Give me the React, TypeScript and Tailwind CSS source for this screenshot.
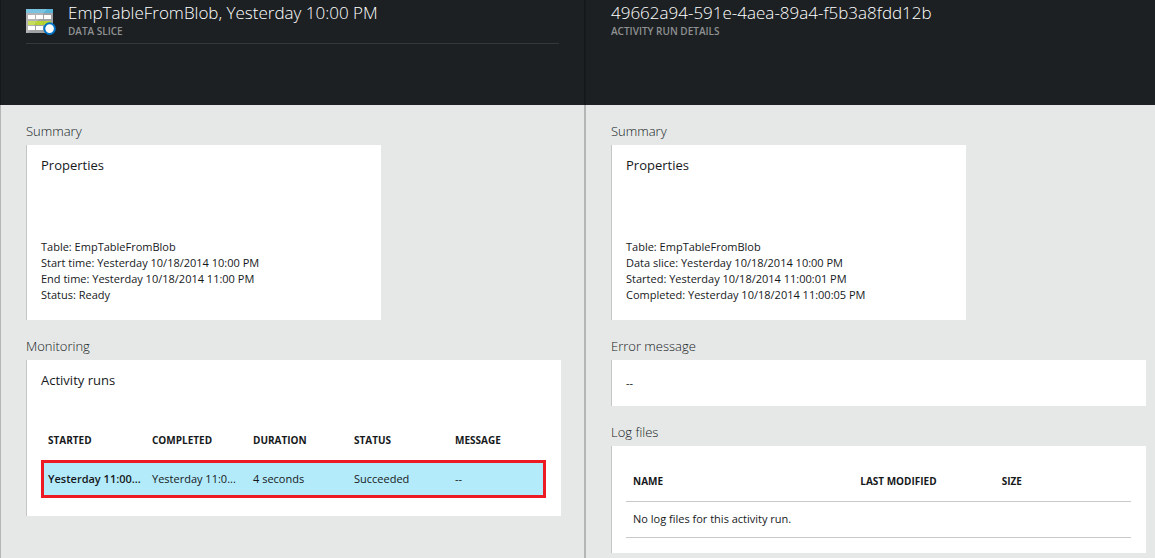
import type { ReactNode } from 'react';

function SliceIcon() {
  return (
    <svg className="mt-[9px] h-[26px] w-[30px] shrink-0" viewBox="0 0 30 26" aria-hidden="true">
      <rect x="0" y="0" width="27" height="24" fill="#a0a1a2" />
      <rect x="0" y="0" width="27" height="4" fill="#59b4d9" />
      <rect x="2" y="12" width="7" height="4" fill="#b8d432" />
      <rect x="10" y="12" width="7" height="4" fill="#b8d432" />
      <rect x="18" y="12" width="7" height="4" fill="#b8d432" />
      <path d="M9.5 12v4M17.5 12v4" stroke="#a9c63a" strokeWidth="1" />
      <path d="M0 0H21L2 24H0Z" fill="#ffffff" fillOpacity="0.2" />
      <g fill="#ffffff">
        <rect x="2" y="6" width="7" height="4" />
        <rect x="10" y="6" width="7" height="4" />
        <rect x="18" y="6" width="7" height="4" />
        <rect x="2" y="17" width="7" height="4" />
        <rect x="10" y="17" width="7" height="4" />
      </g>
      <circle cx="23.6" cy="19.6" r="5.3" fill="#ffffff" stroke="#0072c6" strokeWidth="2" />
    </svg>
  );
}

function BladeHeader({ title, subtitle, icon }: { title: string; subtitle: string; icon?: ReactNode }) {
  return (
    <header className="h-[105px] bg-[#1c2022] pl-[25px] pr-[25px] text-white">
      <div className={`flex h-11 gap-3 ${icon ? 'border-b border-[#34383a]' : ''}`}>
        {icon}
        <div className="min-w-0 whitespace-nowrap">
          <h1 className="text-[17px] leading-[25px] font-light">{title}</h1>
          <p className="text-[10px] leading-[13px] font-semibold text-[#8f9192]">{subtitle}</p>
        </div>
      </div>
    </header>
  );
}

function Section({ label, children }: { label: string; children: ReactNode }) {
  return (
    <section className="pt-4">
      <h2 className="mb-1 text-[13px] leading-5 font-light">{label}</h2>
      {children}
    </section>
  );
}

const card = 'border-l border-[#c4c6c6] bg-white pl-[14px] pr-[15px]';

function Properties({ lines }: { lines: string[] }) {
  return (
    <div className={`${card} max-w-[355px] pt-[10px] pb-[17px]`}>
      <h3 className="text-[13px] leading-5">Properties</h3>
      <div className="mt-16 text-[11px] leading-4">
        {lines.map((line) => (
          <p key={line}>{line}</p>
        ))}
      </div>
    </div>
  );
}

const th = 'h-10 pl-[7px] text-left text-[10px] font-bold';

export default function App() {
  return (
    <div className="grid min-h-screen grid-cols-[584fr_571fr] bg-[#e5e8e7] font-['Open_Sans','Noto_Sans',sans-serif] text-[#16191b]">
      <div className="flex min-w-0 flex-col">
        <div className="border-l border-[#14181a]">
          <BladeHeader title="EmpTableFromBlob, Yesterday 10:00 PM" subtitle="DATA SLICE" icon={<SliceIcon />} />
        </div>
        <main className="flex-1 border-l border-[#b3b6b5] pl-[25px] pr-[23px]">
          <Section label="Summary">
            <Properties
              lines={[
                'Table: EmpTableFromBlob',
                'Start time: Yesterday 10/18/2014 10:00 PM',
                'End time: Yesterday 10/18/2014 11:00 PM',
                'Status: Ready',
              ]}
            />
          </Section>
          <Section label="Monitoring">
            <div className={`${card} pt-[10px] pb-[18px]`}>
              <h3 className="text-[13px] leading-5">Activity runs</h3>
              <table className="mt-[30px] w-full table-fixed border-separate border-spacing-0 whitespace-nowrap">
                <colgroup>
                  <col className="w-[104px]" />
                  <col className="w-[20%]" />
                  <col className="w-[20%]" />
                  <col className="w-[20%]" />
                  <col />
                </colgroup>
                <thead>
                  <tr>
                    <th className={th}>STARTED</th>
                    <th className={th}>COMPLETED</th>
                    <th className={th}>DURATION</th>
                    <th className={th}>STATUS</th>
                    <th className={th}>MESSAGE</th>
                  </tr>
                </thead>
                <tbody>
                  <tr className="bg-[#b3ebfa] text-[11px] outline-3 -outline-offset-3 outline-[#ed1c24]">
                    <td className="h-[38px] pl-[7px] font-semibold">Yesterday 11:00...</td>
                    <td className="pl-[7px]">Yesterday 11:0...</td>
                    <td className="pl-[7px]">4 seconds</td>
                    <td className="pl-[7px]">Succeeded</td>
                    <td className="pl-[7px]">--</td>
                  </tr>
                </tbody>
              </table>
            </div>
          </Section>
        </main>
      </div>

      <div className="flex min-w-0 flex-col">
        <div className="border-l-2 border-[#16191b]">
          <BladeHeader title="49662a94-591e-4aea-89a4-f5b3a8fdd12b" subtitle="ACTIVITY RUN DETAILS" />
        </div>
        <main className="flex-1 border-l-2 border-[#b3b6b5] pl-[25px] pr-[9px]">
          <Section label="Summary">
            <Properties
              lines={[
                'Table: EmpTableFromBlob',
                'Data slice: Yesterday 10/18/2014 10:00 PM',
                'Started: Yesterday 10/18/2014 11:00:01 PM',
                'Completed: Yesterday 10/18/2014 11:00:05 PM',
              ]}
            />
          </Section>
          <Section label="Error message">
            <div className={`${card} py-[15px] text-[11px] leading-4`}>--</div>
          </Section>
          <Section label="Log files">
            <div className={`${card} pt-[15px] pb-[15px]`}>
              <table className="w-full table-fixed border-separate border-spacing-0 whitespace-nowrap">
                <colgroup>
                  <col className="w-[45%]" />
                  <col className="w-[28%]" />
                  <col />
                </colgroup>
                <thead>
                  <tr>
                    <th className={th}>NAME</th>
                    <th className={th}>LAST MODIFIED</th>
                    <th className={th}>SIZE</th>
                  </tr>
                </thead>
                <tbody>
                  <tr>
                    <td colSpan={3} className="h-[37px] border-y border-[#c8caca] pl-[7px] text-[11px]">
                      No log files for this activity run.
                    </td>
                  </tr>
                </tbody>
              </table>
            </div>
          </Section>
        </main>
      </div>
    </div>
  );
}
